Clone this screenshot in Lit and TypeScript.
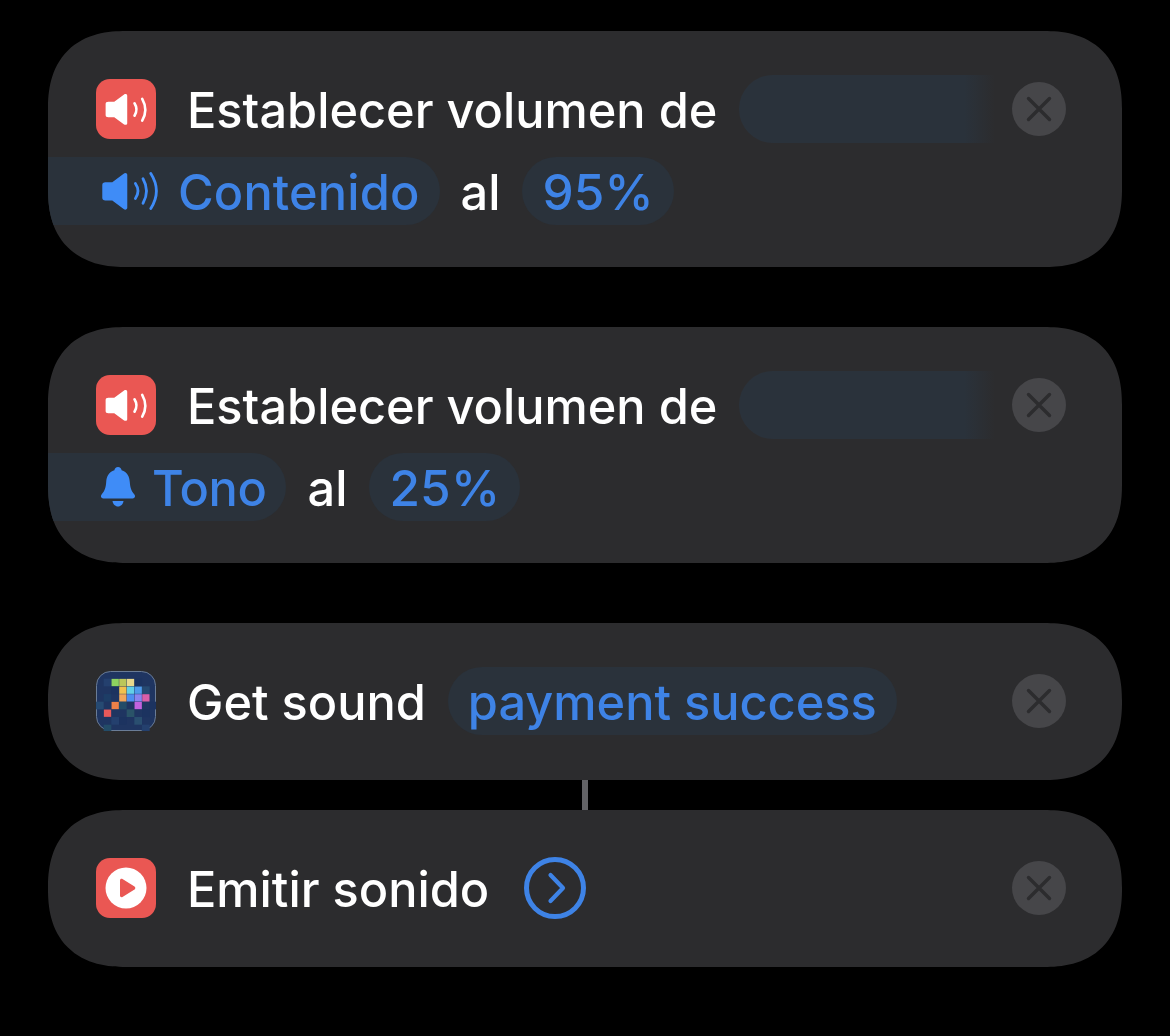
import { css, html, LitElement, svg } from 'lit';
import { customElement } from 'lit/decorators.js';

const speakerBody = 'M4 17.500h5.500L18.600 9.600c1.300-1.100 2.900-.4 2.900 1.200v30.400c0 1.600-1.600 2.300-2.900 1.200L9.500 34.500H4c-1.600 0-2.500-.9-2.500-2.500V20c0-1.600.9-2.500 2.500-2.500z';

const mosaic: [number, number, string][] = [
  [2, 1, '#8ed35f'], [3, 1, '#bcc75a'], [4, 1, '#ead98c'],
  [3, 2, '#f2c14e'], [4, 2, '#63d0e6'], [5, 2, '#4f9bea'],
  [3, 3, '#f2a65a'], [4, 3, '#4d8ff0'], [5, 3, '#8a84ef'], [6, 3, '#d95fa8'],
  [2, 4, '#ee8048'], [5, 4, '#c262df'],
  [1, 5, '#e8595a'],
];

const tiles: [number, number, string][] = [
  [1, 1, '#24406e'], [5, 1, '#1c3360'], [6, 2, '#264a72'], [1, 3, '#1d3d66'], [2, 2, '#1c3360'],
  [0, 4, '#264a72'], [3, 4, '#234c68'], [4, 5, '#2a5368'], [6, 5, '#1c3360'], [2, 6, '#24406e'],
  [5, 6, '#2a4f70'], [3, 6, '#1c3360'], [1, 7, '#234c68'], [6, 7, '#24406e'], [7, 4, '#1c3360'],
];

@customElement('app-root')
export class AppRoot extends LitElement {
  static styles = css`
    :host {
      display: block;
      box-sizing: border-box;
      width: 1170px;
      height: 1036px;
      padding: 31px 48px 0;
      background: #000;
      font-family: Inter, "Noto Sans", sans-serif;
      font-size: 48.7px;
      font-weight: 450;
      color: #fff;
    }

    .card {
      display: flex;
      flex-direction: column;
      gap: 14px;
      padding: 44px 56px 42px 48px;
      margin-bottom: 60px;
      background: #2c2c2e;
      border-radius: 78px;
      corner-shape: superellipse(1.25);
      overflow: hidden;
    }

    .card.single {
      padding-top: 44px;
      padding-bottom: 45px;
    }

    .card.linked {
      margin-bottom: 0;
    }

    .connector {
      width: 6px;
      height: 30px;
      margin-left: 534px;
      background: #636366;
    }

    .row {
      display: flex;
      align-items: center;
      height: 68px;
      white-space: nowrap;
    }

    .label {
      padding-top: 2px;
    }

    .app-icon {
      display: block;
      flex: none;
      width: 60px;
      height: 60px;
      margin-right: 31px;
    }

    .pill {
      display: flex;
      align-items: center;
      box-sizing: border-box;
      height: 68px;
      padding: 2px 20px 0;
      margin-left: 22px;
      border-radius: 34px;
      background: #2a323b;
      color: #3e83e6;
    }

    .pill.level {
      font-size: 49.5px;
      letter-spacing: .2px;
    }

    .pill.blank {
      width: 256px;
      padding: 0;
      border-radius: 34px 0 0 34px;
      background: linear-gradient(90deg, #2a323b 88%, #2c2c2e 100%);
    }

    .pill.lead {
      margin-left: -48px;
      border-radius: 0 34px 34px 0;
    }

    .pill.lead.volume {
      padding-left: 54px;
      letter-spacing: .15px;
    }

    .pill.lead.ring {
      padding-left: 52px;
      letter-spacing: -.4px;
    }

    .pill svg {
      display: block;
      flex: none;
      margin-top: -2px;
    }

    .volume svg {
      width: 57px;
      height: 40px;
      margin-right: 19px;
    }

    .ring svg {
      width: 36px;
      height: 40px;
      margin-right: 16px;
    }

    .word {
      margin-left: 21px;
    }

    .go {
      display: block;
      flex: none;
      width: 62px;
      height: 62px;
      margin-left: 35px;
    }

    .close {
      display: block;
      flex: none;
      width: 54px;
      height: 54px;
      margin-left: auto;
    }
  `;

  private _soundIcon() {
    return html`
      <svg class="app-icon" viewBox="0 0 60 60">
        <rect width="60" height="60" rx="14" fill="#ea5753"></rect>
        <path transform="translate(8 6.800) scale(1.080 .91)" d=${speakerBody} fill="#fff"></path>
        <path d="M38.500 24.300Q42.400 30.500 38.500 36.700" fill="none" stroke="#fff" stroke-width="2.600" stroke-linecap="round"></path>
        <path d="M46.200 19.800Q52.400 30.700 46.200 41.600" fill="none" stroke="#fff" stroke-width="2.600" stroke-linecap="round"></path>
      </svg>
    `;
  }

  private _playIcon() {
    return html`
      <svg class="app-icon" viewBox="0 0 60 60">
        <rect width="60" height="60" rx="14" fill="#ea5753"></rect>
        <circle cx="30" cy="30" r="20.500" fill="#fff"></circle>
        <path d="M24 22.500c0-1.400 1.300-2.100 2.500-1.400l12 7.500c1.100.7 1.100 2.200 0 2.900l-12 7.400c-1.200.7-2.500 0-2.500-1.400z" fill="#ea5753"></path>
      </svg>
    `;
  }

  private _mosaicIcon() {
    return html`
      <svg class="app-icon" viewBox="0 0 60 60">
        <rect x=".5" y=".5" width="59" height="59" rx="14" fill="#1f3561" stroke="#6a7c96"></rect>
        ${tiles.map(([x, y, fill]) => svg`<rect x=${x * 7.67} y=${y * 7.67} width="7.670" height="7.670" fill=${fill}></rect>`)}
        ${mosaic.map(([x, y, fill]) => svg`<rect x=${x * 7.67 + .2} y=${y * 7.67 + .2} width="7.300" height="7.300" fill=${fill}></rect>`)}
      </svg>
    `;
  }

  private _close() {
    return html`
      <svg class="close" viewBox="0 0 54 54">
        <circle cx="27" cy="27" r="27" fill="#464649"></circle>
        <path d="M16.500 16.500l21 21M37.500 16.500l-21 21" stroke="#2c2c2e" stroke-width="3.400" stroke-linecap="round"></path>
      </svg>
    `;
  }

  private _volumeGlyph() {
    return html`
      <svg viewBox="0 0 57 40">
        <path transform="translate(-1.600 -7.700) scale(1.250 1.080)" d=${speakerBody} fill="#3f8cf7"></path>
        <path d="M33.400 12.500Q38.600 20 33.400 27.500" fill="none" stroke="#3f8cf7" stroke-width="2.800" stroke-linecap="round"></path>
        <path d="M41 7.800Q48 20 41 32.200" fill="none" stroke="#3f8cf7" stroke-width="2.800" stroke-linecap="round"></path>
        <path d="M48.800 2.500Q60 20 48.800 37.500" fill="none" stroke="#3f8cf7" stroke-width="2.800" stroke-linecap="round"></path>
      </svg>
    `;
  }

  private _bellGlyph() {
    return html`
      <svg viewBox="0 0 36 40">
        <path d="M18 0c2 0 3.400 1.400 3.600 3.200C27.200 4.800 29.400 9.500 29.800 15c.4 5.300 1.200 8.500 4.600 12.600 1.300 1.600.5 3.900-1.700 3.900H3.300c-2.200 0-3-2.300-1.700-3.900C5 23.500 5.800 20.300 6.200 15 6.600 9.500 8.800 4.800 14.400 3.200 14.600 1.400 16 0 18 0z" fill="#3f8cf7"></path>
        <path d="M12.500 34h11c-.5 3.200-2.700 5.500-5.500 5.500s-5-2.300-5.500-5.500z" fill="#3f8cf7"></path>
      </svg>
    `;
  }

  private _volumeCard(pillClass: string, glyph: unknown, label: string, level: string) {
    return html`
      <section class="card">
        <div class="row">
          ${this._soundIcon()}
          <span class="label">Establecer volumen de</span>
          <span class="pill blank"></span>
          ${this._close()}
        </div>
        <div class="row">
          <span class="pill lead ${pillClass}">${glyph}${label}</span>
          <span class="label word">al</span>
          <span class="pill level">${level}</span>
        </div>
      </section>
    `;
  }

  render() {
    return html`
      ${this._volumeCard('volume', this._volumeGlyph(), 'Contenido', '95%')}
      ${this._volumeCard('ring', this._bellGlyph(), 'Tono', '25%')}
      <section class="card single linked">
        <div class="row">
          ${this._mosaicIcon()}
          <span class="label">Get sound</span>
          <span class="pill">payment success</span>
          ${this._close()}
        </div>
      </section>
      <div class="connector"></div>
      <section class="card single">
        <div class="row">
          ${this._playIcon()}
          <span class="label">Emitir sonido</span>
          <svg class="go" viewBox="0 0 62 62">
            <circle cx="31" cy="31" r="28.500" fill="none" stroke="#3e83e6" stroke-width="5"></circle>
            <path d="M26.500 18L39 31 26.500 44" fill="none" stroke="#3e83e6" stroke-width="4.200" stroke-linecap="round" stroke-linejoin="round"></path>
          </svg>
          ${this._close()}
        </div>
      </section>
    `;
  }
}
